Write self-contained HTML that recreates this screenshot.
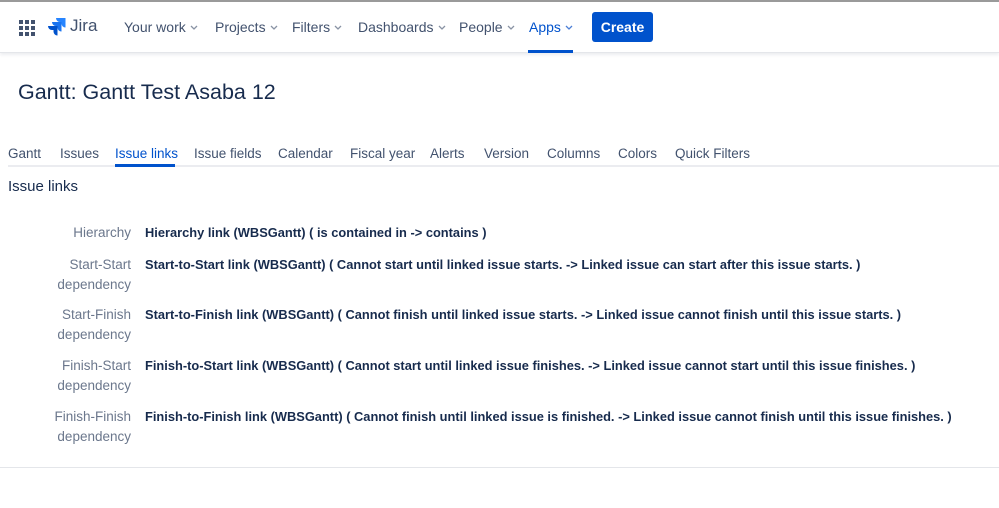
<!DOCTYPE html>
<html><head><meta charset="utf-8"><style>
*{margin:0;padding:0;box-sizing:border-box}
body{width:999px;height:508px;background:#fff;font-family:"Liberation Sans",sans-serif;color:#172b4d;position:relative;overflow:hidden}
.top{position:absolute;left:0;top:0;width:999px;height:2px;background:#9a9a9a}
.hdr{position:absolute;left:0;top:2px;width:999px;height:51px;border-bottom:1px solid #e4e6ea;box-shadow:0 2px 3px rgba(9,30,66,.08)}
.nav{position:absolute;top:19px;font-size:14px;color:#42526e;white-space:nowrap}
.nav svg{margin-left:4px;vertical-align:2px}
.apps{color:#0052cc}
.ul{position:absolute;left:528px;top:50px;width:45px;height:3px;background:#0052cc}
.create{position:absolute;left:592px;top:12px;width:61px;height:30px;background:#0052cc;border-radius:3px;color:#fff;font-size:14px;font-weight:bold;text-align:center;line-height:30px}
h1{position:absolute;left:18px;top:80px;font-size:21.5px;font-weight:normal;color:#172b4d}
.tabs{position:absolute;left:8px;top:146px;font-size:13.5px;color:#42526e}
.tabs span{position:absolute;white-space:nowrap}
.tabline{position:absolute;left:8px;top:165px;width:991px;height:2px;background:#ebecf0}
.tabsel{position:absolute;left:115px;top:164px;width:60px;height:3px;background:#0052cc}
h2{position:absolute;left:8px;top:178px;font-size:15px;font-weight:normal}
.lbl{position:absolute;right:868px;text-align:right;font-size:13.5px;color:#6b778c;line-height:20px}
.val{position:absolute;left:145px;font-size:12.85px;font-weight:bold;white-space:nowrap;line-height:20px}
.bot{position:absolute;left:0;top:467px;width:999px;height:1px;background:#e4e6ea}
</style></head><body>
<div class="top"></div>
<div class="hdr"></div>
<svg style="position:absolute;left:19px;top:20px" width="16" height="16"><g fill="#42526e"><rect x="0" y="0" width="4" height="4"/><rect x="6" y="0" width="4" height="4"/><rect x="12" y="0" width="4" height="4"/><rect x="0" y="6" width="4" height="4"/><rect x="6" y="6" width="4" height="4"/><rect x="12" y="6" width="4" height="4"/><rect x="0" y="12" width="4" height="4"/><rect x="6" y="12" width="4" height="4"/><rect x="12" y="12" width="4" height="4"/></g></svg>
<svg style="position:absolute;left:47px;top:17px" width="19" height="19" viewBox="0 0 19 19"><path d="M18 1H9a4 4 0 0 0 4 4h1.5v1.5a4 4 0 0 0 4 4V1z" fill="#2684ff"/><path d="M14 5H5a4 4 0 0 0 4 4h1.5v1.5a4 4 0 0 0 4 4V5z" fill="#1a74f0"/><path d="M10 9H1a4 4 0 0 0 4 4h1.5v1.5a4 4 0 0 0 4 4V9z" fill="#0052cc"/></svg>
<div class="nav" style="left:70px;top:16px;font-size:17px;color:#42526e">Jira</div>
<div class="nav" style="left:124px">Your work<svg width="8" height="5"><path d="M1 1l3 3 3-3" stroke="#8993a4" stroke-width="1.3" fill="none"/></svg></div>
<div class="nav" style="left:215px">Projects<svg width="8" height="5"><path d="M1 1l3 3 3-3" stroke="#8993a4" stroke-width="1.3" fill="none"/></svg></div>
<div class="nav" style="left:292px">Filters<svg width="8" height="5"><path d="M1 1l3 3 3-3" stroke="#8993a4" stroke-width="1.3" fill="none"/></svg></div>
<div class="nav" style="left:358px">Dashboards<svg width="8" height="5"><path d="M1 1l3 3 3-3" stroke="#8993a4" stroke-width="1.3" fill="none"/></svg></div>
<div class="nav" style="left:459px">People<svg width="8" height="5"><path d="M1 1l3 3 3-3" stroke="#8993a4" stroke-width="1.3" fill="none"/></svg></div>
<div class="nav apps" style="left:529px">Apps<svg width="8" height="5"><path d="M1 1l3 3 3-3" stroke="#4c7fd6" stroke-width="1.3" fill="none"/></svg></div>
<div class="ul"></div>
<div class="create">Create</div>
<h1>Gantt: Gantt Test Asaba 12</h1>
<div class="tabs">
<span style="left:0">Gantt</span><span style="left:52px">Issues</span><span style="left:107px;color:#0052cc">Issue links</span><span style="left:186px">Issue fields</span><span style="left:270px">Calendar</span><span style="left:342px">Fiscal year</span><span style="left:422px">Alerts</span><span style="left:476px">Version</span><span style="left:539px">Columns</span><span style="left:610px">Colors</span><span style="left:667px">Quick Filters</span>
</div>
<div class="tabline"></div><div class="tabsel"></div>
<h2>Issue links</h2>
<div class="lbl" style="top:223px">Hierarchy</div>
<div class="val" style="top:223px">Hierarchy link (WBSGantt) ( is contained in -&gt; contains )</div>
<div class="lbl" style="top:255px">Start-Start<br>dependency</div>
<div class="val" style="top:255px">Start-to-Start link (WBSGantt) ( Cannot start until linked issue starts. -&gt; Linked issue can start after this issue starts. )</div>
<div class="lbl" style="top:305px">Start-Finish<br>dependency</div>
<div class="val" style="top:305px">Start-to-Finish link (WBSGantt) ( Cannot finish until linked issue starts. -&gt; Linked issue cannot finish until this issue starts. )</div>
<div class="lbl" style="top:356px">Finish-Start<br>dependency</div>
<div class="val" style="top:356px">Finish-to-Start link (WBSGantt) ( Cannot start until linked issue finishes. -&gt; Linked issue cannot start until this issue finishes. )</div>
<div class="lbl" style="top:407px">Finish-Finish<br>dependency</div>
<div class="val" style="top:407px">Finish-to-Finish link (WBSGantt) ( Cannot finish until linked issue is finished. -&gt; Linked issue cannot finish until this issue finishes. )</div>
<div class="bot"></div>
</body></html>
